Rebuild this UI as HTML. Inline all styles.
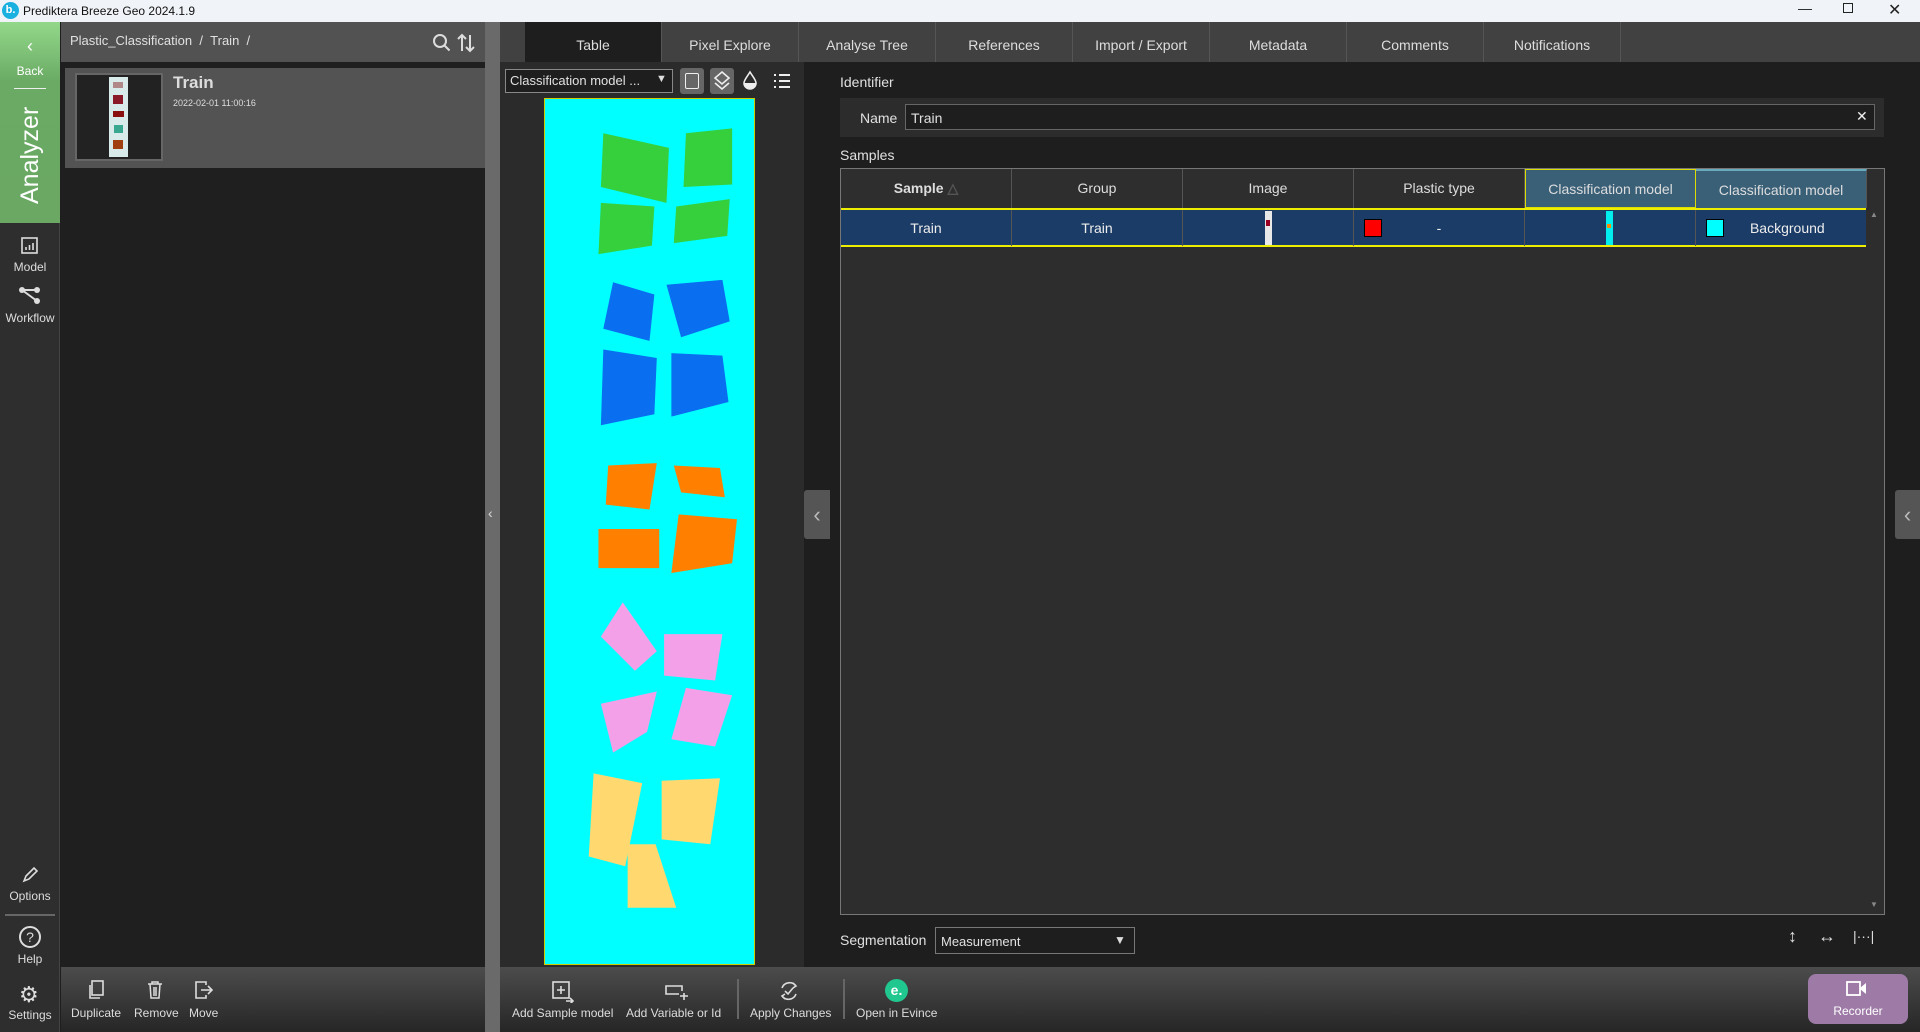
<!DOCTYPE html>
<html><head><meta charset="utf-8"><style>
*{box-sizing:border-box;margin:0;padding:0}
body{width:1920px;height:1032px;overflow:hidden;background:#1e1e1e;font-family:"Liberation Sans",sans-serif;color:#ddd;position:relative}
.a{position:absolute}
.t{font-size:14px;color:#e0e0e0;white-space:nowrap}
.tab{position:absolute;top:22px;height:40px;width:137px;line-height:46px;text-align:center;font-size:14px;color:#ddd;border-right:1px solid #555}
.nav{position:absolute;left:0;width:60px;text-align:center;font-size:12px;color:#ddd}
.th{position:absolute;top:169px;height:39px;width:171px;background:#2e2e2e;border-right:1px solid #555;line-height:39px;text-align:center;font-size:14px;color:#ddd}
.td{position:absolute;top:210px;height:36px;width:171px;border-right:1px solid #555;line-height:36px;text-align:center;font-size:14px;color:#eee}
.bt{position:absolute;top:975px;text-align:center;font-size:12px;color:#ddd;white-space:nowrap}
</style></head><body>
<!-- title bar -->
<div class="a" style="left:0;top:0;width:1920px;height:22px;background:#f0f3f7"></div>
<div class="a" style="left:2px;top:2px;width:17px;height:17px;border-radius:50%;background:#1ab0e0;color:#fff;font-size:11px;font-weight:bold;text-align:center;line-height:17px">b.</div>
<div class="a" style="left:23px;top:4px;font-size:12px;color:#111">Prediktera Breeze Geo 2024.1.9</div>
<div class="a" style="left:1798px;top:0;font-size:14px;color:#222">&#8212;</div>
<div class="a" style="left:1843px;top:3px;width:10px;height:10px;border:1px solid #222"></div>
<div class="a" style="left:1888px;top:0;font-size:16px;color:#222">&#10005;</div>

<!-- left nav -->
<div class="a" style="left:0;top:22px;width:60px;height:1010px;background:#2e2e2e;border-right:1px solid #444"></div>
<div class="a" style="left:0;top:22px;width:60px;height:201px;background:linear-gradient(#92d88a,#6aaa64 30%,#6aa864)"></div>
<div class="nav" style="top:36px;font-size:18px;color:#fff">&#8249;</div>
<div class="nav" style="top:64px;color:#fff">Back</div>
<div class="a" style="left:14px;top:88px;width:32px;height:1px;background:#eee"></div>
<div class="a" style="left:18px;top:204px;transform:rotate(-90deg);transform-origin:left top;font-size:25px;line-height:1;color:#fff;white-space:nowrap">Analyzer</div>
<svg class="a" style="left:20px;top:236px" width="20" height="20" viewBox="0 0 20 20"><rect x="2" y="2" width="15" height="15" fill="none" stroke="#ddd" stroke-width="1.6"/><path d="M6 14v-3M9.5 14v-5M13 14v-7" stroke="#ddd" stroke-width="1.6"/></svg>
<div class="nav" style="top:260px">Model</div>
<svg class="a" style="left:18px;top:286px" width="24" height="20" viewBox="0 0 24 20"><circle cx="4" cy="4" r="3" fill="#ddd"/><circle cx="19" cy="4" r="3" fill="#ddd"/><circle cx="19" cy="15" r="3" fill="#ddd"/><path d="M4 4h15M4 4l15 11" stroke="#ddd" stroke-width="2"/></svg>
<div class="nav" style="top:311px">Workflow</div>
<svg class="a" style="left:20px;top:865px" width="20" height="20" viewBox="0 0 20 20"><path d="M4 16l2-5 8-8 3 3-8 8z" fill="none" stroke="#ddd" stroke-width="1.6"/></svg>
<div class="nav" style="top:889px">Options</div>
<div class="a" style="left:5px;top:914px;width:50px;height:2px;background:#666"></div>
<div class="a" style="left:19px;top:926px;width:22px;height:22px;border:2px solid #ddd;border-radius:50%;text-align:center;font-size:14px;line-height:18px;color:#ddd">?</div>
<div class="nav" style="top:952px">Help</div>
<div class="a" style="left:19px;top:982px;font-size:22px;color:#ddd">&#9881;</div>
<div class="nav" style="top:1008px">Settings</div>

<!-- left panel -->
<div class="a" style="left:61px;top:22px;width:424px;height:40px;background:#525252"></div>
<div class="a t" style="left:70px;top:33px;font-size:13px">Plastic_Classification&nbsp; / &nbsp;Train&nbsp; /</div>
<svg class="a" style="left:432px;top:33px" width="20" height="20" viewBox="0 0 20 20"><circle cx="8" cy="8" r="6" fill="none" stroke="#ddd" stroke-width="2"/><path d="M12.5 12.5l5 5" stroke="#ddd" stroke-width="2"/></svg>
<svg class="a" style="left:457px;top:32px" width="18" height="22" viewBox="0 0 18 22"><path d="M5 19V3M1 7l4-4 4 4M13 3v16M9 15l4 4 4-4" fill="none" stroke="#ddd" stroke-width="2"/></svg>
<div class="a" style="left:61px;top:62px;width:424px;height:905px;background:#1f1f1f"></div>
<div class="a" style="left:65px;top:68px;width:420px;height:100px;background:#535353"></div>
<div class="a" style="left:75px;top:73px;width:88px;height:88px;background:#222;border:2px solid #666"></div>
<div class="a" style="left:109px;top:77px;width:19px;height:80px;background:#d8eaea"></div>
<div class="a" style="left:113px;top:82px;width:10px;height:6px;background:#b08888"></div>
<div class="a" style="left:113px;top:95px;width:10px;height:9px;background:#8a1a2a"></div>
<div class="a" style="left:113px;top:111px;width:11px;height:6px;background:#8a1010"></div>
<div class="a" style="left:114px;top:125px;width:9px;height:8px;background:#3aa890"></div>
<div class="a" style="left:113px;top:140px;width:10px;height:9px;background:#a04010"></div>
<div class="a" style="left:173px;top:73px;font-size:17px;font-weight:bold;color:#ddd">Train</div>
<div class="a" style="left:173px;top:98px;font-size:9px;color:#ddd">2022-02-01 11:00:16</div>

<!-- splitter -->
<div class="a" style="left:485px;top:22px;width:15px;height:1010px;background:#6a6a6a"></div>
<div class="a" style="left:488px;top:505px;font-size:14px;color:#ddd">&#8249;</div>

<!-- tabs -->
<div class="a" style="left:500px;top:22px;width:1420px;height:40px;background:#414141"></div>
<div class="tab" style="left:525px;background:#1e1e1e">Table</div>
<div class="tab" style="left:662px">Pixel Explore</div>
<div class="tab" style="left:799px">Analyse Tree</div>
<div class="tab" style="left:936px">References</div>
<div class="tab" style="left:1073px">Import / Export</div>
<div class="tab" style="left:1210px">Metadata</div>
<div class="tab" style="left:1347px">Comments</div>
<div class="tab" style="left:1484px">Notifications</div>

<!-- image panel -->
<div class="a" style="left:500px;top:62px;width:304px;height:905px;background:#2b2b2b"></div>
<div class="a" style="left:505px;top:69px;width:168px;height:24px;background:#1e1e1e;border:1px solid #888"></div>
<div class="a t" style="left:510px;top:73px;font-size:13px">Classification model ...</div>
<div class="a" style="left:656px;top:73px;font-size:11px">&#9660;</div>
<div class="a" style="left:680px;top:68px;width:24px;height:26px;background:#666;border-radius:3px"></div>
<div class="a" style="left:685px;top:73px;width:14px;height:16px;border:1.5px solid #eee;border-radius:2px"></div>
<div class="a" style="left:710px;top:68px;width:24px;height:26px;background:#666;border-radius:3px"></div>
<svg class="a" style="left:713px;top:70px" width="18" height="22" viewBox="0 0 18 22"><path d="M9 2l7 6-7 6-7-6z M2 13l7 6 7-6" fill="none" stroke="#eee" stroke-width="1.6"/></svg>
<svg class="a" style="left:742px;top:70px" width="16" height="20" viewBox="0 0 16 20"><path d="M8 2C5 7 2 10 2 13a6 6 0 0012 0c0-3-3-6-6-11z" fill="none" stroke="#eee" stroke-width="1.6"/><path d="M2.5 13h11a5.5 5.5 0 01-11 0z" fill="#eee"/></svg>
<svg class="a" style="left:773px;top:72px" width="18" height="18" viewBox="0 0 18 18"><path d="M1 3h2M1 9h2M1 15h2M6 3h11M6 9h11M6 15h11" stroke="#eee" stroke-width="2"/></svg>
<svg class="a" style="left:544px;top:98px;border:1px solid #cc0" width="211" height="867" viewBox="444 80 172 708" preserveAspectRatio="none">
<rect x="444" y="80" width="172" height="708" fill="#00ffff"/>
<g fill="#36d03c"><polygon points="492,108 546,120 544,165 490,152"/><polygon points="560,108 598,104 598,150 558,152"/><polygon points="490,165 534,168 532,200 488,207"/><polygon points="552,168 596,162 594,192 550,198"/></g>
<g fill="#0a6ef0"><polygon points="500,230 534,240 530,278 492,268"/><polygon points="544,232 590,228 596,262 556,275"/><polygon points="492,285 536,292 534,338 490,347"/><polygon points="548,288 590,290 595,328 548,340"/></g>
<g fill="#ff8000"><polygon points="496,380 536,378 530,416 494,412"/><polygon points="550,380 588,382 592,406 556,402"/><polygon points="488,432 538,432 538,464 488,464"/><polygon points="554,420 602,424 598,460 548,468"/></g>
<g fill="#f4a0e8"><polygon points="508,492 536,532 518,548 490,520"/><polygon points="542,518 590,518 584,556 542,552"/><polygon points="490,575 536,565 528,598 500,615"/><polygon points="560,562 598,568 584,610 548,604"/></g>
<g fill="#ffd870"><polygon points="484,632 524,640 510,708 480,700"/><polygon points="540,638 588,636 580,690 540,686"/><polygon points="512,690 535,690 552,742 512,742"/></g>
</svg>
<div class="a" style="left:804px;top:490px;width:26px;height:49px;background:#555;border-radius:3px 0 0 3px;text-align:center;line-height:49px;font-size:22px;color:#bbb">&#8249;</div>

<!-- right content -->
<div class="a t" style="left:840px;top:74px">Identifier</div>
<div class="a" style="left:840px;top:98px;width:1044px;height:39px;background:#2c2c2c"></div>
<div class="a t" style="left:860px;top:110px">Name</div>
<div class="a" style="left:905px;top:104px;width:970px;height:26px;background:#1e1e1e;border:1px solid #666"></div>
<div class="a t" style="left:911px;top:110px">Train</div>
<div class="a" style="left:1856px;top:108px;font-size:14px;color:#eee">&#10005;</div>
<div class="a t" style="left:840px;top:147px">Samples</div>
<div class="a" style="left:840px;top:168px;width:1045px;height:747px;background:#2d2d2d;border:1px solid #777"></div>
<div class="th" style="left:841px;font-weight:bold">Sample <span style="color:#555">&#9651;</span></div>
<div class="th" style="left:1012px">Group</div>
<div class="th" style="left:1183px">Image</div>
<div class="th" style="left:1354px">Plastic type</div>
<div class="th" style="left:1525px;background:#3a6078;border:1px solid #dd0">Classification model</div>
<div class="th" style="left:1696px;background:#3a6078;border-top:2px solid #6ab">Classification model</div>
<div class="a" style="left:841px;top:208px;width:1025px;height:39px;background:#1b3c66;border-top:2px solid #ee0;border-bottom:2px solid #ee0"></div>
<div class="td" style="left:841px">Train</div>
<div class="td" style="left:1012px">Train</div>
<div class="td" style="left:1183px"><span class="a" style="left:82px;top:1px;width:7px;height:34px;background:#e8e8e8"></span><span class="a" style="left:83px;top:10px;width:4px;height:6px;background:#902"></span></div>
<div class="td" style="left:1354px"><span class="a" style="left:10px;top:9px;width:18px;height:18px;background:#f00;border:1px solid #000"></span>-</div>
<div class="td" style="left:1525px"><span class="a" style="left:81px;top:1px;width:7px;height:34px;background:#0ee"></span><span class="a" style="left:82px;top:14px;width:4px;height:4px;background:#f80"></span></div>
<div class="td" style="left:1696px;border:none"><span class="a" style="left:10px;top:9px;width:18px;height:18px;background:#0ff;border:1px solid #000"></span>&nbsp;&nbsp;&nbsp;Background</div>
<div class="a" style="left:1870px;top:210px;font-size:8px;color:#888">&#9650;</div>
<div class="a" style="left:1870px;top:900px;font-size:8px;color:#888">&#9660;</div>

<div class="a t" style="left:840px;top:932px">Segmentation</div>
<div class="a" style="left:935px;top:927px;width:200px;height:27px;background:#1e1e1e;border:1px solid #777"></div>
<div class="a t" style="left:941px;top:934px;font-size:13px">Measurement</div>
<div class="a" style="left:1114px;top:933px;font-size:12px">&#9660;</div>
<div class="a" style="left:1788px;top:926px;font-size:18px;color:#ddd">&#8597;</div>
<div class="a" style="left:1818px;top:926px;font-size:18px;color:#ddd">&#8596;</div>
<div class="a" style="left:1853px;top:928px;font-size:14px;color:#ddd">|&middot;&middot;&middot;|</div>
<div class="a" style="left:1895px;top:490px;width:25px;height:49px;background:#555;border-radius:3px 0 0 3px;text-align:center;line-height:49px;font-size:22px;color:#bbb">&#8249;</div>

<!-- bottom toolbars -->
<div class="a" style="left:61px;top:967px;width:424px;height:65px;background:linear-gradient(#4c4c4c,#262626)"></div>
<div class="a" style="left:500px;top:967px;width:1420px;height:65px;background:linear-gradient(#4c4c4c,#262626)"></div>
<svg class="a" style="left:87px;top:980px" width="18" height="20" viewBox="0 0 18 20"><rect x="5" y="1" width="11" height="14" fill="none" stroke="#ddd" stroke-width="1.6"/><path d="M3 5v13h10" fill="none" stroke="#ddd" stroke-width="1.6"/></svg>
<div class="bt" style="left:71px;top:1006px">Duplicate</div>
<svg class="a" style="left:147px;top:980px" width="16" height="20" viewBox="0 0 16 20"><path d="M1 4h14M5 4V2h6v2M3 4l1 14h8l1-14M7 7v9M9 7v9" fill="none" stroke="#ddd" stroke-width="1.5"/></svg>
<div class="bt" style="left:134px;top:1006px">Remove</div>
<svg class="a" style="left:194px;top:980px" width="20" height="20" viewBox="0 0 20 20"><path d="M12 5V2H2v16h10v-3M7 10h11M14 6l4 4-4 4" fill="none" stroke="#ddd" stroke-width="1.6"/></svg>
<div class="bt" style="left:189px;top:1006px">Move</div>

<svg class="a" style="left:552px;top:981px" width="22" height="22" viewBox="0 0 22 22"><rect x="1" y="1" width="16" height="16" fill="none" stroke="#ddd" stroke-width="1.6"/><path d="M9 5v8M5 9h8M14 20h6M18 17l3 3-3 3" fill="none" stroke="#ddd" stroke-width="1.6"/></svg>
<div class="bt" style="left:512px;top:1006px">Add Sample model</div>
<svg class="a" style="left:665px;top:984px" width="24" height="16" viewBox="0 0 24 16"><path d="M14 10H1V2h16v5M19 9v7M15 12h8" fill="none" stroke="#ddd" stroke-width="1.6"/></svg>
<div class="bt" style="left:626px;top:1006px">Add Variable or Id</div>
<div class="a" style="left:737px;top:979px;width:2px;height:40px;background:#666"></div>
<svg class="a" style="left:778px;top:980px" width="22" height="22" viewBox="0 0 22 22"><path d="M4 8a8 8 0 0114-2M18 14a8 8 0 01-14 2M15 3l3 3-3 2M7 19l-3-3 3-2M7 11l3 3 5-6" fill="none" stroke="#ddd" stroke-width="1.6"/></svg>
<div class="bt" style="left:750px;top:1006px">Apply Changes</div>
<div class="a" style="left:843px;top:979px;width:2px;height:40px;background:#666"></div>
<div class="a" style="left:885px;top:979px;width:23px;height:23px;border-radius:50%;background:#20c890;color:#fff;font-weight:bold;font-size:14px;text-align:center;line-height:22px">e.</div>
<div class="bt" style="left:856px;top:1006px">Open in Evince</div>

<div class="a" style="left:1808px;top:974px;width:100px;height:50px;background:#9e7aa6;border-radius:8px"></div>
<svg class="a" style="left:1846px;top:980px" width="22" height="18" viewBox="0 0 22 18"><rect x="1" y="2" width="13" height="13" fill="none" stroke="#fff" stroke-width="1.8"/><path d="M14 8l6-5v11l-6-5z" fill="#fff"/></svg>
<div class="bt" style="left:1808px;top:1004px;width:100px;color:#fff">Recorder</div>
</body></html>
